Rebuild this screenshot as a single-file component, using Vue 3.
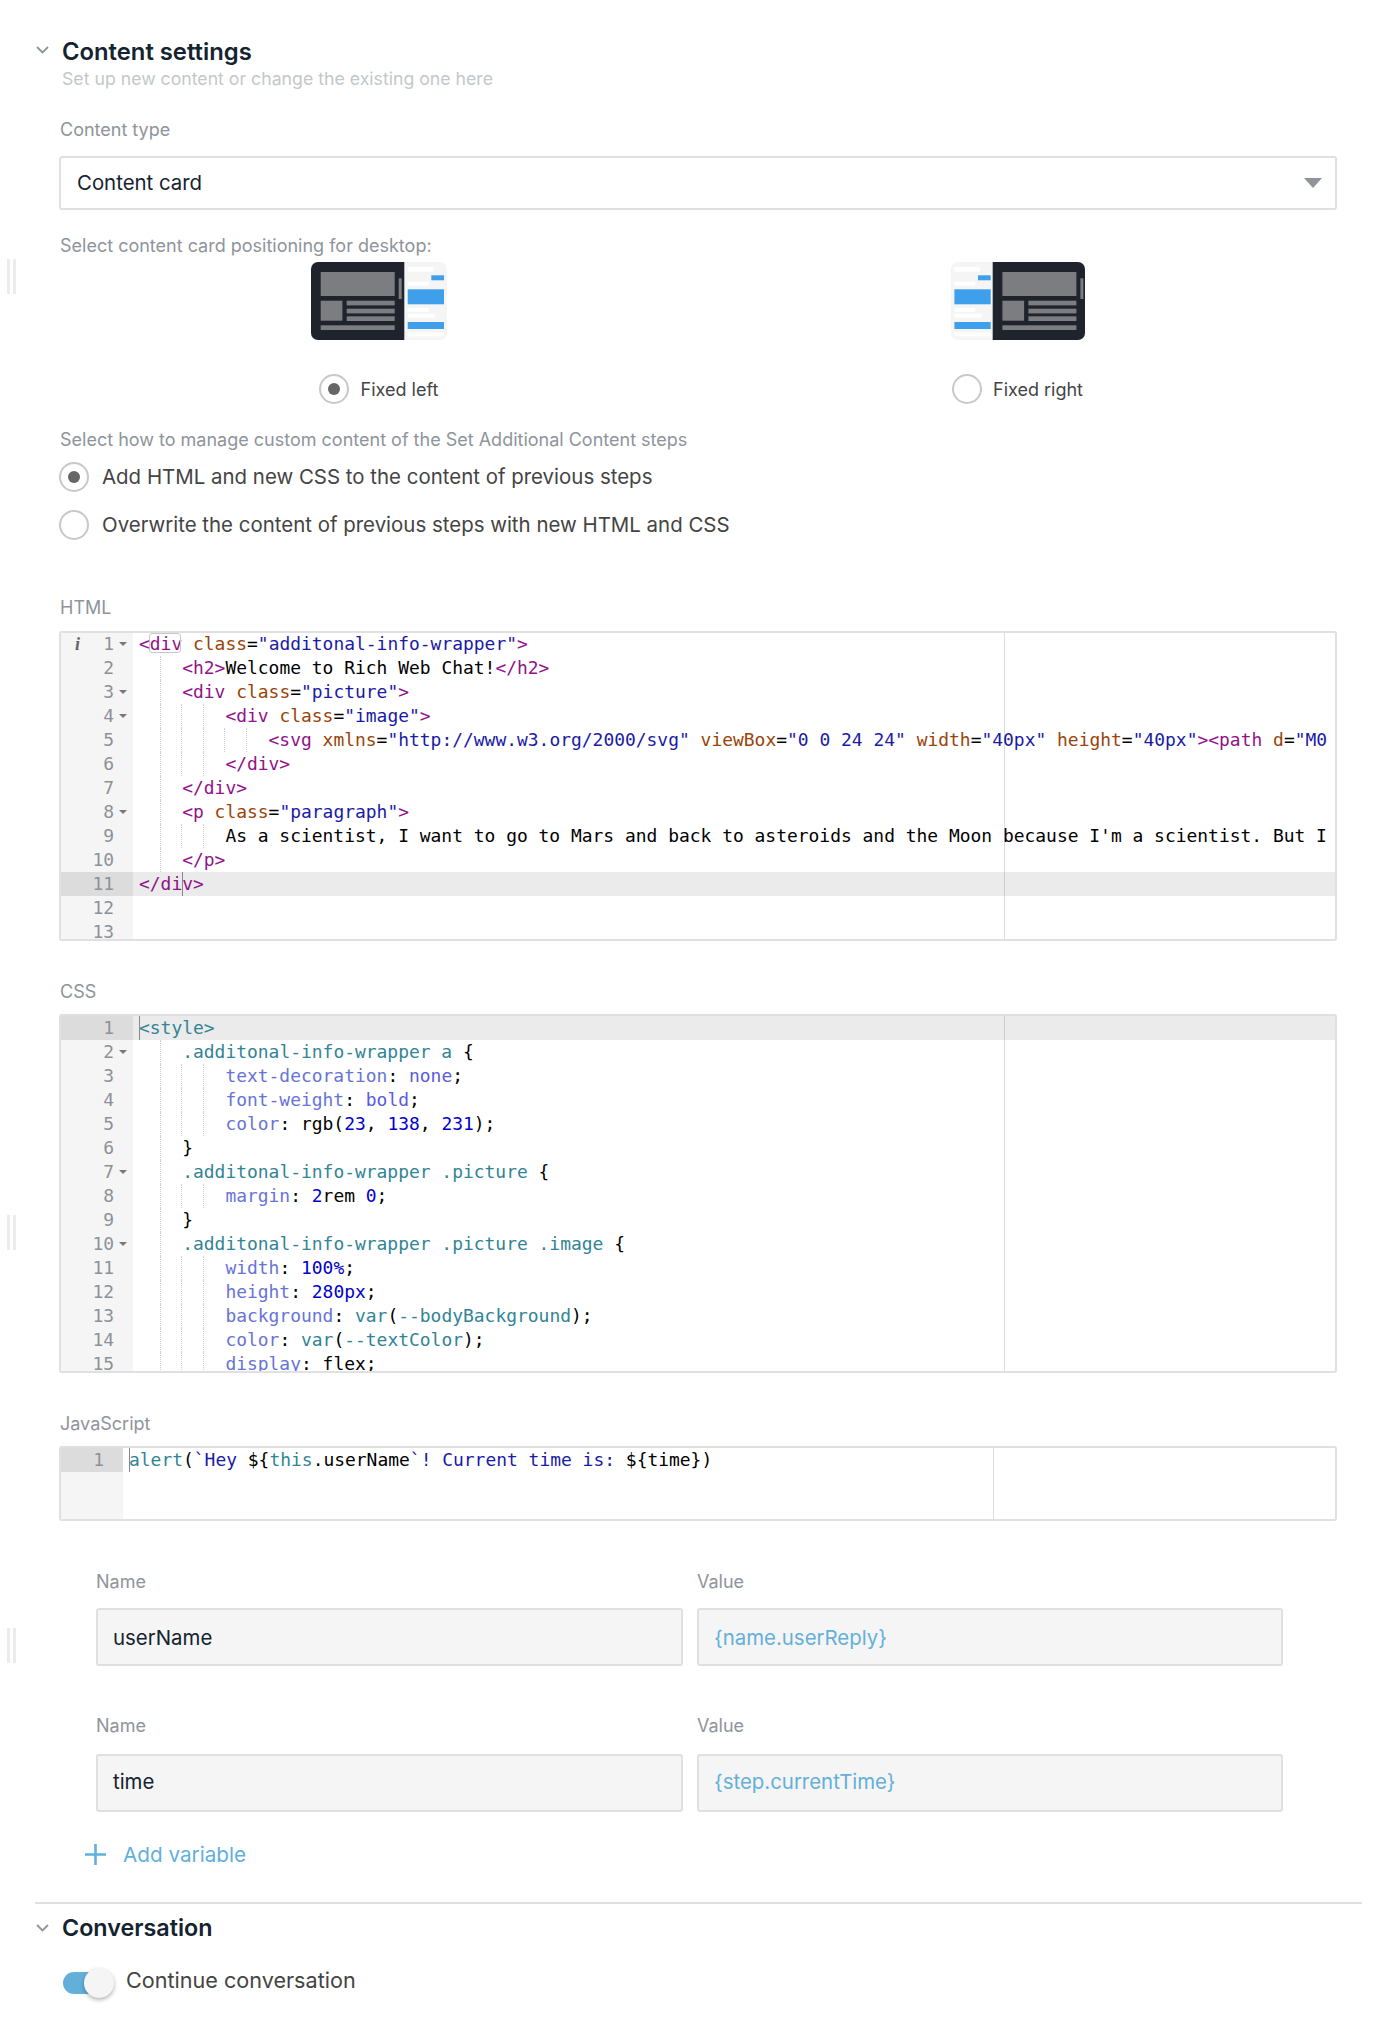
<script setup>
const darkRects = [
  [9.7, 10, 74, 24], [87.7, 16.3, 3, 20.7], [9.7, 38.7, 21.7, 20],
  [35.7, 38.7, 48, 4.7], [35.7, 46.7, 48, 4.7], [35.7, 54.3, 48, 4.7], [9.7, 63.3, 74, 4.7]
]
const chatRects = [
  [3.4, 5, 25.7, 4.7, '#fff'], [27, 13.3, 12.7, 5, '#3f9fea'], [3.4, 19.7, 21, 4, '#fff'],
  [3.4, 27.3, 36.3, 15, '#3f9fea'], [3.4, 46, 21, 4, '#fff'], [3.4, 51.7, 27, 4, '#fff'],
  [3.4, 60, 36.3, 7, '#3f9fea'], [3.4, 70.3, 36.3, 4, '#fff']
]
const tag = 't', at = 'a', st = 's', tx = 'x', sel = 'c', prop = 'p', num = 'n', kw = 'k'
const html = [
  { i: 0, f: 1, t: [[tag, '<div'], [tx, ' '], [at, 'class'], [tx, '='], [st, '"additonal-info-wrapper"'], [tag, '>']] },
  { i: 4, t: [[tag, '<h2>'], [tx, 'Welcome to Rich Web Chat!'], [tag, '</h2>']] },
  { i: 4, f: 1, t: [[tag, '<div'], [tx, ' '], [at, 'class'], [tx, '='], [st, '"picture"'], [tag, '>']] },
  { i: 8, f: 1, t: [[tag, '<div'], [tx, ' '], [at, 'class'], [tx, '='], [st, '"image"'], [tag, '>']] },
  { i: 12, t: [[tag, '<svg'], [tx, ' '], [at, 'xmlns'], [tx, '='], [st, '"http://www.w3.org/2000/svg"'], [tx, ' '], [at, 'viewBox'], [tx, '='], [st, '"0 0 24 24"'], [tx, ' '], [at, 'width'], [tx, '='], [st, '"40px"'], [tx, ' '], [at, 'height'], [tx, '='], [st, '"40px"'], [tag, '><path'], [tx, ' '], [at, 'd'], [tx, '='], [st, '"M0']] },
  { i: 8, t: [[tag, '</div>']] },
  { i: 4, t: [[tag, '</div>']] },
  { i: 4, f: 1, t: [[tag, '<p'], [tx, ' '], [at, 'class'], [tx, '='], [st, '"paragraph"'], [tag, '>']] },
  { i: 8, t: [[tx, "As a scientist, I want to go to Mars and back to asteroids and the Moon because I'm a scientist. But I"]] },
  { i: 4, t: [[tag, '</p>']] },
  { i: 0, on: 1, t: [[tag, '</div>']] },
  { i: 0, t: [] },
  { i: 0, t: [] }
]
const css = [
  { i: 0, on: 1, t: [[sel, '<style>']] },
  { i: 4, f: 1, t: [[sel, '.additonal-info-wrapper a'], [tx, ' {']] },
  { i: 8, t: [[prop, 'text-decoration'], [tx, ': '], [kw, 'none'], [tx, ';']] },
  { i: 8, t: [[prop, 'font-weight'], [tx, ': '], [kw, 'bold'], [tx, ';']] },
  { i: 8, t: [[prop, 'color'], [tx, ': rgb('], [num, '23'], [tx, ', '], [num, '138'], [tx, ', '], [num, '231'], [tx, ');']] },
  { i: 4, t: [[tx, '}']] },
  { i: 4, f: 1, t: [[sel, '.additonal-info-wrapper .picture'], [tx, ' {']] },
  { i: 8, t: [[prop, 'margin'], [tx, ': '], [num, '2'], [tx, 'rem '], [num, '0'], [tx, ';']] },
  { i: 4, t: [[tx, '}']] },
  { i: 4, f: 1, t: [[sel, '.additonal-info-wrapper .picture .image'], [tx, ' {']] },
  { i: 8, t: [[prop, 'width'], [tx, ': '], [num, '100%'], [tx, ';']] },
  { i: 8, t: [[prop, 'height'], [tx, ': '], [num, '280px'], [tx, ';']] },
  { i: 8, t: [[prop, 'background'], [tx, ': '], [sel, 'var'], [tx, '('], [sel, '--bodyBackground'], [tx, ');']] },
  { i: 8, t: [[prop, 'color'], [tx, ': '], [sel, 'var'], [tx, '('], [sel, '--textColor'], [tx, ');']] },
  { i: 8, t: [[prop, 'display'], [tx, ': flex;']] }
]
const js = [
  { i: 0, t: [[sel, 'alert'], [tx, '('], [st, '`Hey '], [tx, '${'], [sel, 'this'], [tx, '.userName'], [st, '`! Current time is: '], [tx, '${time})']] }
]
const editors = [
  { label: 'HTML', cls: 'ed-html', lines: html },
  { label: 'CSS', cls: 'ed-css', lines: css }
]
const guides = (n) => Math.max(0, n / 2 - 1)
const vars = [
  ['userName', '{name.userReply}'],
  ['time', '{step.currentTime}']
]
</script>

<template>
  <div class="page">
    <span class="handle h1"></span>
    <span class="handle h2"></span>
    <span class="handle h3"></span>

    <header class="sec-head">
      <svg class="chev up" viewBox="0 0 13 8" width="13" height="8"><path d="M1 1l5.5 5.5L12 1" fill="none" stroke="#8e949b" stroke-width="1.8"/></svg>
      <h2 class="title">Content settings</h2>
    </header>
    <p class="sub">Set up new content or change the existing one here</p>

    <div class="label m-type">Content type</div>
    <div class="select">
      <span>Content card</span>
      <i class="caret"></i>
    </div>

    <div class="label m-desk">Select content card positioning for desktop:</div>
    <div class="positions">
      <div class="pos">
        <svg class="thumb" viewBox="0 0 136 78" width="136" height="78">
          <rect width="136" height="78" fill="#f5f5f5"/>
          <rect width="93.3" height="78" fill="#1f242c"/>
          <rect v-for="(r, i) in darkRects" :key="i" :x="r[0]" :y="r[1]" :width="r[2]" :height="r[3]" fill="#7b7d80"/>
          <g transform="translate(93.3 0)">
            <rect v-for="(r, i) in chatRects" :key="i" :x="r[0]" :y="r[1]" :width="r[2]" :height="r[3]" :fill="r[4]"/>
          </g>
        </svg>
        <label class="radio-row m-pos"><span class="radio on"></span><span class="pos-text">Fixed left</span></label>
      </div>
      <div class="pos">
        <svg class="thumb" viewBox="0 0 134 78" width="134" height="78">
          <rect width="134" height="78" fill="#f5f5f5"/>
          <rect x="41.7" width="92.3" height="78" fill="#1f242c"/>
          <g transform="translate(41.7 0)">
            <rect v-for="(r, i) in darkRects" :key="i" :x="r[0]" :y="r[1]" :width="r[2]" :height="r[3]" fill="#7b7d80"/>
          </g>
          <rect v-for="(r, i) in chatRects" :key="i" :x="r[0]" :y="r[1]" :width="r[2]" :height="r[3]" :fill="r[4]"/>
        </svg>
        <label class="radio-row m-pos tight"><span class="radio"></span><span class="pos-text">Fixed right</span></label>
      </div>
    </div>

    <div class="label m-manage">Select how to manage custom content of the Set Additional Content steps</div>
    <label class="radio-row opt m-r1"><span class="radio on"></span><span class="opt-text">Add HTML and new CSS to the content of previous steps</span></label>
    <label class="radio-row opt m-r2"><span class="radio"></span><span class="opt-text">Overwrite the content of previous steps with new HTML and CSS</span></label>

    <template v-for="ed in editors" :key="ed.label">
      <div class="label" :class="ed.label === 'HTML' ? 'm-html' : 'm-css'">{{ ed.label }}</div>
      <div class="editor" :class="ed.cls">
        <div class="gutter">
          <div v-for="(l, n) in ed.lines" :key="n" class="gut-row" :class="{ active: l.on }">
            <span v-if="ed.label === 'HTML' && n === 0" class="info">i</span>
            <span class="num">{{ n + 1 }}</span>
            <i v-if="l.f" class="fold"></i>
          </div>
        </div>
        <div class="code">
          <div v-for="(l, n) in ed.lines" :key="n" class="line" :class="{ active: l.on }"><span v-for="g in guides(l.i)" :key="g" class="ig"></span><span v-if="l.i" class="ig last"></span><span v-for="(tok, k) in l.t" :key="k" :class="tok[0]">{{ tok[1] }}</span></div>
        </div>
        <span class="margin-line"></span>
        <span v-if="ed.label === 'HTML'" class="word-box"></span>
        <span v-if="ed.label === 'HTML'" class="cursor cursor-html"></span>
        <span v-else class="cursor cursor-css"></span>
      </div>
    </template>

    <div class="label m-css">JavaScript</div>
    <div class="editor ed-js">
      <div class="gutter">
        <div class="gut-row active"><span class="num">1</span></div>
      </div>
      <div class="code">
        <div v-for="(l, n) in js" :key="n" class="line"><span v-for="(tok, k) in l.t" :key="k" :class="tok[0]">{{ tok[1] }}</span></div>
      </div>
      <span class="margin-line"></span>
      <span class="cursor cursor-js"></span>
    </div>

    <div class="vars">
      <div v-for="(v, i) in vars" :key="i" class="var-row" :class="{ first: i === 0 }">
        <div class="field">
          <div class="label">Name</div>
          <div class="input">{{ v[0] }}</div>
        </div>
        <div class="field">
          <div class="label">Value</div>
          <div class="input val">{{ v[1] }}</div>
        </div>
      </div>
      <button class="add" type="button">
        <svg viewBox="0 0 21 21" width="21" height="21"><path d="M10.5 0v21M0 10.5h21" stroke="#5fb0dc" stroke-width="2.6" fill="none"/></svg>
        <span>Add variable</span>
      </button>
    </div>

    <hr class="divider" />

    <header class="sec-head m-conv">
      <svg class="chev" viewBox="0 0 13 8" width="13" height="8"><path d="M1 1l5.5 5.5L12 1" fill="none" stroke="#8e949b" stroke-width="1.8"/></svg>
      <h2 class="title small">Conversation</h2>
    </header>
    <div class="toggle-row">
      <span class="toggle"><i class="knob"></i></span>
      <span class="toggle-text">Continue conversation</span>
    </div>
  </div>
</template>

<style>
html, body { background: #fff; }
</style>

<style scoped>
.page {
  position: relative;
  box-sizing: border-box;
  width: 1393px;
  height: 2034px;
  padding: 38px 56px 0 59px;
  font-family: Inter, "Noto Sans", sans-serif;
  overflow: hidden;
}
.handle {
  position: absolute;
  left: 7px;
  width: 3px;
  height: 35px;
  background: #ececec;
  box-shadow: 6px 0 0 #ececec;
}
.h1 { top: 259px; }
.h2 { top: 1215px; }
.h3 { top: 1628px; }

.sec-head {
  display: flex;
  align-items: center;
  height: 28px;
  margin-left: -23px;
}
.chev { margin-right: 13px; }
.chev.up { margin-top: -5px; }
.title {
  margin: 0;
  font-size: 23.8px;
  line-height: 28px;
  font-weight: 600;
  color: #14232f;
}
.title.small { font-size: 23.3px; }
.sub {
  margin: 1px 0 0 3px;
  font-size: 17.7px;
  line-height: 24px;
  color: #c4c7cb;
}
.label {
  margin-left: 1px;
  font-size: 18px;
  line-height: 24px;
  color: #8e949b;
}
.m-type { margin-top: 27px; }
.m-desk { margin-top: 24px; }
.m-manage { margin-top: 24px; }
.m-html { margin-top: 56px; }
.m-css { margin-top: 39px; }

.select {
  box-sizing: border-box;
  display: flex;
  align-items: center;
  justify-content: space-between;
  height: 54px;
  margin-top: 14px;
  padding: 0 13px 1px 16px;
  border: 2px solid #e0e0e0;
  border-radius: 3px;
  font-size: 20.4px;
  color: #14232f;
}
.caret {
  width: 0;
  height: 0;
  border-left: 9px solid transparent;
  border-right: 9px solid transparent;
  border-top: 10px solid #8e949b;
}
.positions {
  display: grid;
  grid-template-columns: 1fr 1fr;
  margin-top: 4px;
}
.pos {
  display: flex;
  flex-direction: column;
  align-items: center;
}
.thumb { display: block; border-radius: 7px; }
.radio-row {
  display: flex;
  align-items: center;
  gap: 12px;
  height: 30px;
}
.radio-row.tight { gap: 11px; }
.radio-row.opt { gap: 13px; }
.m-pos { margin-top: 34px; }
.m-r1 { margin-top: 10px; }
.m-r2 { margin-top: 18px; }
.radio {
  box-sizing: border-box;
  display: flex;
  align-items: center;
  justify-content: center;
  width: 30px;
  height: 30px;
  border: 2px solid #c8c8c8;
  border-radius: 50%;
  background: #fff;
}
.radio.on::after {
  content: "";
  width: 12px;
  height: 12px;
  border-radius: 50%;
  background: #666;
}
.pos-text { font-size: 18px; color: #444; }
.opt-text { font-size: 20.44px; color: #444; margin-top: -1px; }

.editor {
  position: relative;
  box-sizing: border-box;
  display: flex;
  border: 2px solid #e0e0e0;
  border-radius: 3px;
  overflow: hidden;
  font-family: "DejaVu Sans Mono", monospace;
  font-size: 17.94px;
  line-height: 24px;
  background: #fff;
}
.ed-html { height: 310px; margin-top: 11px; }
.ed-css { height: 359px; margin-top: 10px; }
.ed-js { height: 75px; margin-top: 10px; }
.gutter {
  flex: none;
  box-sizing: border-box;
  width: 72px;
  background: #f5f5f5;
  color: #8b9298;
}
.ed-js .gutter { width: 62px; }
.gut-row {
  position: relative;
  box-sizing: border-box;
  height: 24px;
  padding-right: 19px;
  text-align: right;
}
.ed-html .gut-row { top: -1px; }
.gut-row.active { background: #dcdcdc; }
.info {
  position: absolute;
  left: 14px;
  top: 0;
  font-family: "Liberation Serif", serif;
  font-style: italic;
  font-weight: 700;
  color: #666;
}
.fold {
  position: absolute;
  right: 6px;
  top: 10px;
  width: 0;
  height: 0;
  border-left: 4px solid transparent;
  border-right: 4px solid transparent;
  border-top: 4px solid #777;
}
.code {
  flex: 1;
  min-width: 0;
  overflow: hidden;
}
.line {
  position: relative;
  box-sizing: border-box;
  height: 24px;
  padding-left: 6px;
  white-space: pre;
  color: #000;
}
.ed-html .line { top: -1px; }
.line.active { background: #ebebeb; }
.ig {
  box-sizing: border-box;
  display: inline-block;
  width: 2ch;
  height: 24px;
  vertical-align: top;
  border-right: 1px dotted #cfcfcf;
}
.ig.last { border-right: 0; }
.t { color: #91128a; }
.a { color: #994409; }
.s { color: #1a1aa6; }
.x { color: #000; }
.c { color: #318495; }
.p { color: #6873d8; }
.k { color: #5a5ae0; }
.n { color: #0000cd; }
.margin-line {
  position: absolute;
  top: 0;
  bottom: 0;
  left: 943px;
  width: 1px;
  background: rgba(0, 0, 0, 0.13);
}
.ed-js .margin-line { left: 932px; }
.word-box {
  position: absolute;
  left: 88px;
  top: 0;
  width: 32px;
  height: 20px;
  box-sizing: border-box;
  border: 1px solid #c8c8c8;
  border-radius: 3px;
}
.cursor {
  position: absolute;
  width: 1px;
  height: 24px;
  background: #888;
}
.cursor-html { left: 121px; top: 239px; }
.cursor-css { left: 78px; top: 0; }
.cursor-js { left: 68px; top: 0; }

.vars { margin-left: 37px; width: 1187px; }
.vars .label { margin-left: 0; }
.var-row {
  display: grid;
  grid-template-columns: 587px 586px;
  column-gap: 14px;
  margin-top: 48px;
}
.var-row.first { margin-top: 49px; }
.input {
  box-sizing: border-box;
  display: flex;
  align-items: center;
  height: 58px;
  margin-top: 16px;
  padding: 0 15px 3px;
  border: 2px solid #e0e0e0;
  border-radius: 3px;
  background: #f5f5f5;
  font-size: 20.4px;
  color: #14232f;
}
.first .input { margin-top: 14px; padding-bottom: 0; }
.input.val { color: #64b0d9; }
.add {
  display: flex;
  align-items: center;
  gap: 17px;
  height: 24px;
  margin: 30px 0 0 -11px;
  padding: 0;
  border: 0;
  background: none;
  font-family: inherit;
  font-size: 20.7px;
  color: #5fb0dc;
}
.divider {
  box-sizing: border-box;
  width: 1327px;
  height: 2px;
  margin: 36px 0 0 -24px;
  border: 0;
  background: #e0e0e0;
}
.m-conv { margin-top: 10px; }
.toggle-row {
  display: flex;
  align-items: center;
  height: 30px;
  margin: 26px 0 0 4px;
}
.toggle {
  position: relative;
  flex: none;
  width: 37px;
  height: 22px;
  border-radius: 11px 0 0 11px;
  background: #62b0da;
}
.knob {
  position: absolute;
  left: 21px;
  top: -4px;
  width: 30px;
  height: 30px;
  border-radius: 50%;
  background: #f5f5f5;
  box-shadow: 0 2px 4px rgba(0, 0, 0, 0.3);
}
.toggle-text {
  margin: -6px 0 0 26px;
  font-size: 21.6px;
  color: #444;
}
</style>
